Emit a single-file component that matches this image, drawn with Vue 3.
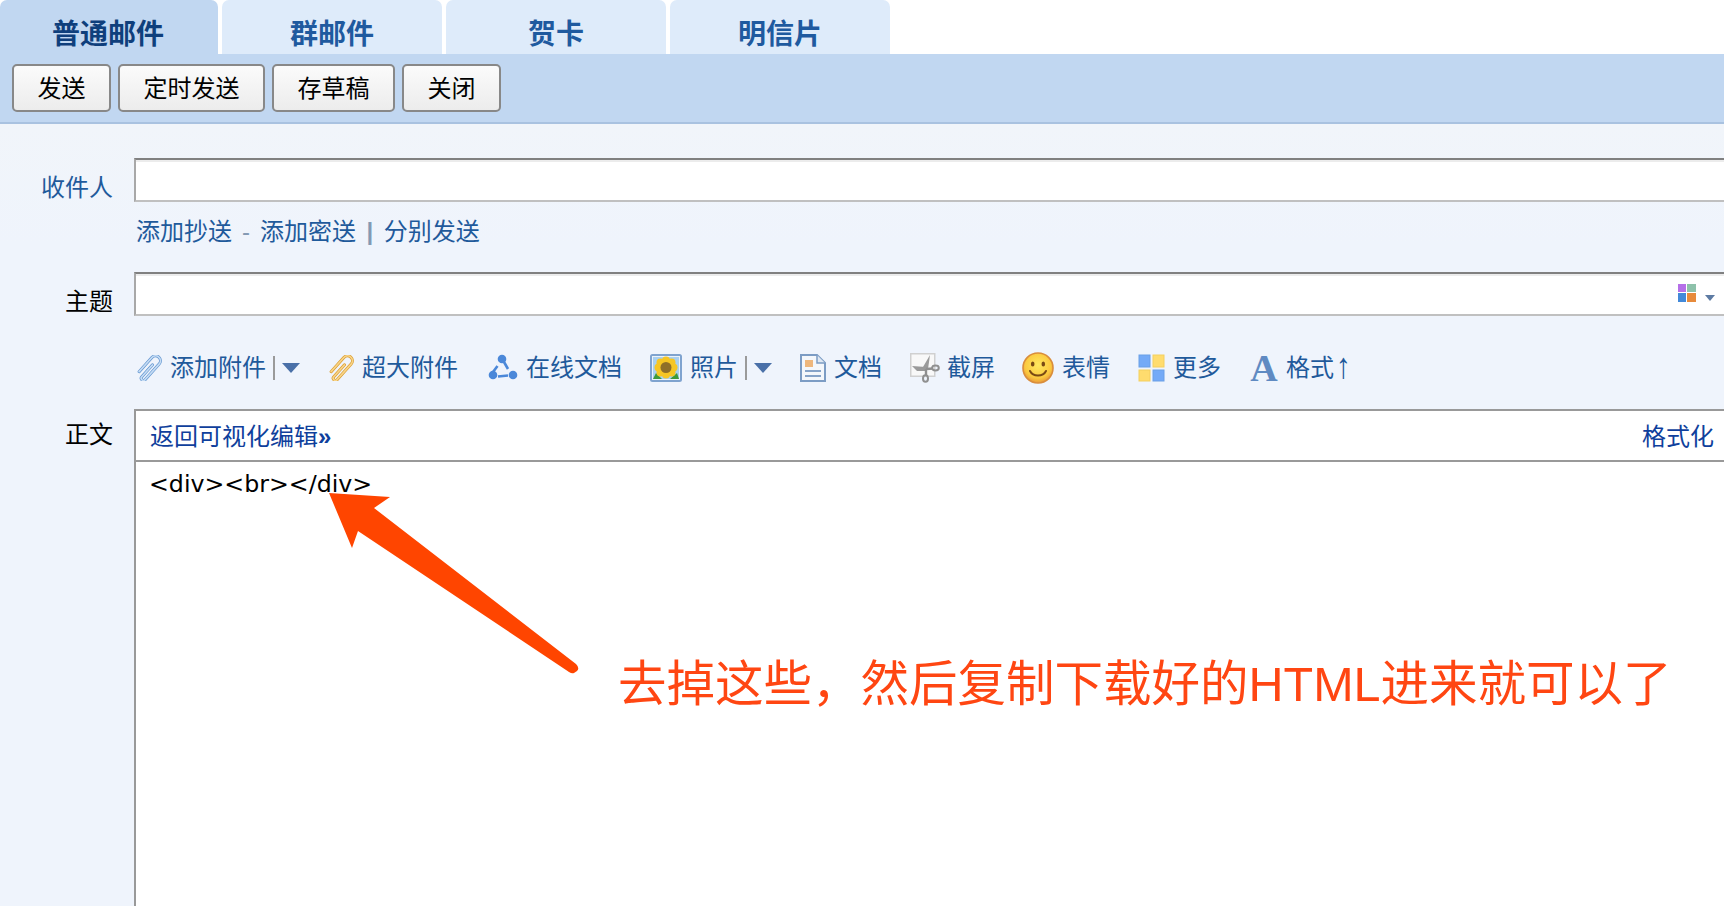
<template>
  <div class="page">
    <!-- 顶部标签 -->
    <div class="tabs">
      <div v-for="(tab, index) in tabs" :key="tab" class="tab" :class="{ active: index === 0 }">{{ tab }}</div>
    </div>

    <!-- 操作按钮 -->
    <div class="action-bar">
      <button v-for="btn in buttons" :key="btn" class="action-btn">{{ btn }}</button>
    </div>

    <div class="compose">
      <div class="row recipient-row">
        <label class="row-label blue">收件人</label>
        <div class="row-main">
          <input class="text-input" type="text" />
          <div class="cc-links">
            <a>添加抄送</a>
            <span class="dash">-</span>
            <a>添加密送</a>
            <span class="pipe">|</span>
            <a>分别发送</a>
          </div>
        </div>
      </div>

      <div class="row subject-row">
        <label class="row-label">主题</label>
        <div class="row-main subject-box">
          <input class="text-input" type="text" />
          <div class="color-pick">
            <svg width="18" height="18" viewBox="0 0 18 18">
              <rect x="0" y="0" width="8" height="8" fill="#b56fe8" />
              <rect x="9" y="0" width="9" height="8" fill="#8dc1aa" />
              <rect x="0" y="9" width="8" height="9" fill="#4289d9" />
              <rect x="9" y="9" width="9" height="9" fill="#e78a3b" />
            </svg>
            <svg class="pick-arrow" width="10" height="6" viewBox="0 0 10 6">
              <path d="M0 0H10L5 6Z" fill="#5d7ba3" />
            </svg>
          </div>
        </div>
      </div>

      <!-- 附件工具栏 -->
      <div class="attach-bar">
        <div class="attach-item">
          <svg width="26" height="26" viewBox="0 0 26 26">
            <g transform="rotate(42 13 13) translate(0 1.3)" fill="none" stroke-linecap="round">
              <path d="M13.500 7V23a2.200 2.200 0 0 0 4.400 0V2a4.900 4.900 0 0 0-9.800 0V21" stroke="#5f93cf" stroke-width="3" />
              <path d="M13.500 7V23a2.200 2.200 0 0 0 4.400 0V2a4.900 4.900 0 0 0-9.800 0V21" stroke="#c5dcf4" stroke-width="1.700" />
            </g>
          </svg>
          <span>添加附件</span>
          <i class="sep"></i>
          <i class="caret"></i>
        </div>
        <div class="attach-item">
          <svg width="26" height="26" viewBox="0 0 26 26">
            <g transform="rotate(42 13 13) translate(0 1.3)" fill="none" stroke-linecap="round">
              <path d="M13.500 7V23a2.200 2.200 0 0 0 4.400 0V2a4.900 4.900 0 0 0-9.800 0V21" stroke="#d99a2b" stroke-width="3" />
              <path d="M13.500 7V23a2.200 2.200 0 0 0 4.400 0V2a4.900 4.900 0 0 0-9.800 0V21" stroke="#f8d488" stroke-width="1.700" />
            </g>
          </svg>
          <span>超大附件</span>
        </div>
        <div class="attach-item online-doc">
          <svg width="30" height="28" viewBox="0 0 30 28">
            <g fill="#4b88d9">
              <circle cx="14" cy="5" r="4.300" />
              <circle cx="5" cy="21" r="4.300" />
              <circle cx="25" cy="21" r="4.300" />
            </g>
            <path d="M16 8L20 15M5 18L9.500 12M10 22.500L20 21.500" stroke="#4b88d9" stroke-width="2.600" fill="none" />
          </svg>
          <span>在线文档</span>
        </div>
        <div class="attach-item">
          <svg width="32" height="28" viewBox="0 0 32 28">
            <rect x="1" y="1" width="30" height="26" rx="1.500" fill="#a9d0f0" stroke="#7fa3cf" stroke-width="2" />
            <rect x="2.500" y="2.500" width="27" height="23" fill="none" stroke="#eaf2fb" />
            <path d="M3 25L6 19L12 25ZM20 25L27 19L29 25Z" fill="#3e9a3a" />
            <g fill="#f6c624">
              <circle cx="16" cy="6.500" r="4" />
              <circle cx="16" cy="20.500" r="4" />
              <circle cx="8.500" cy="13.500" r="4" />
              <circle cx="23.500" cy="13.500" r="4" />
              <circle cx="10.500" cy="8.500" r="4" />
              <circle cx="21.500" cy="8.500" r="4" />
              <circle cx="10.500" cy="18.500" r="4" />
              <circle cx="21.500" cy="18.500" r="4" />
            </g>
            <circle cx="16" cy="13.500" r="5.500" fill="#8f6f28" />
          </svg>
          <span>照片</span>
          <i class="sep"></i>
          <i class="caret"></i>
        </div>
        <div class="attach-item">
          <svg width="26" height="28" viewBox="0 0 26 28">
            <path d="M1 1H17L25 9V27H1Z" fill="#f4f7fb" stroke="#7c9cc4" stroke-width="2" />
            <path d="M17 1V9H25" fill="#dfe8f3" stroke="#7c9cc4" stroke-width="1.500" />
            <rect x="5" y="6" width="8" height="7" fill="#eeb77d" />
            <path d="M5 17H21M5 22H21" stroke="#86a3c8" stroke-width="2" />
          </svg>
          <span>文档</span>
        </div>
        <div class="attach-item screenshot">
          <svg width="30" height="30" viewBox="0 0 30 30">
            <rect x="0.750" y="0.750" width="24" height="22.500" fill="#f8f8f8" stroke="#d0d0d0" stroke-width="1.500" />
            <path d="M2 13L16 14L16 18L7 18Z" fill="#9a9a9a" />
            <path d="M20 2L18 16L13 14Z" fill="#9a9a9a" />
            <path d="M16 16L23 15.500M16 16V22" stroke="#8f8f8f" stroke-width="2.400" fill="none" />
            <ellipse cx="25.500" cy="15" rx="3.300" ry="2.400" fill="none" stroke="#8f8f8f" stroke-width="2" />
            <ellipse cx="15.500" cy="25.500" rx="2.500" ry="3.300" fill="none" stroke="#8f8f8f" stroke-width="2" />
          </svg>
          <span>截屏</span>
        </div>
        <div class="attach-item smiley">
          <svg width="32" height="32" viewBox="0 0 32 32">
            <defs>
              <radialGradient id="smileFill" cx="50%" cy="40%" r="60%">
                <stop offset="0%" stop-color="#ffe85f" />
                <stop offset="72%" stop-color="#fbc93f" />
                <stop offset="100%" stop-color="#e8983a" />
              </radialGradient>
            </defs>
            <circle cx="16" cy="16" r="15" fill="url(#smileFill)" stroke="#d98d3c" stroke-width="1.600" />
            <ellipse cx="10.700" cy="12" rx="1.800" ry="2.600" fill="#7a4a14" />
            <ellipse cx="21.300" cy="12" rx="1.800" ry="2.600" fill="#7a4a14" />
            <path d="M8 19C11 25 21 25 24 19" fill="none" stroke="#7a4a14" stroke-width="2" stroke-linecap="round" />
          </svg>
          <span>表情</span>
        </div>
        <div class="attach-item">
          <svg width="27" height="28" viewBox="0 0 27 28">
            <rect x="1" y="1" width="11" height="12" fill="#74aaf7" stroke="#6b9fe6" />
            <rect x="15" y="1" width="11" height="12" fill="#ffdc6e" stroke="#f4cf5f" />
            <rect x="1" y="16" width="11" height="11" fill="#ffdc6e" stroke="#f4cf5f" />
            <rect x="15" y="16" width="11" height="11" fill="#74aaf7" stroke="#6b9fe6" />
          </svg>
          <span>更多</span>
        </div>
        <div class="attach-item format">
          <span class="format-a">A</span>
          <span>格式<span class="up">↑</span></span>
        </div>
      </div>

      <!-- 正文编辑区 -->
      <div class="row body-row">
        <label class="row-label">正文</label>
        <div class="editor">
          <div class="editor-bar">
            <a>返回可视化编辑<b>»</b></a>
            <a>格式化</a>
          </div>
          <div class="editor-source">{{ source }}</div>
        </div>
      </div>
    </div>

    <!-- 截图标注 -->
    <svg class="note-arrow" width="600" height="700" viewBox="0 0 600 700">
      <path d="M329 493L390 497L374 508L576 664Q580 668 577 671L574 673Q572 674 569 672L358 531L352 548Z" fill="#ff4500" />
    </svg>
    <div class="note-text">去掉这些，然后复制下载好的HTML进来就可以了</div>
  </div>
</template>

<script setup>
const tabs = ['普通邮件', '群邮件', '贺卡', '明信片'];
const buttons = ['发送', '定时发送', '存草稿', '关闭'];
const source = '<div><br></div>';
</script>

<style scoped>
.page {
  position: relative;
  height: 906px;
  overflow: hidden;
  display: flex;
  flex-direction: column;
  background: #fff;
  font-family: "Liberation Sans", "Noto Sans CJK SC", sans-serif;
  font-size: 24px;
  color: #000;
}

.tabs {
  display: flex;
  gap: 4px;
  height: 54px;
}

.tab {
  box-sizing: border-box;
  width: 220px;
  padding-top: 16px;
  border-radius: 7px 7px 0 0;
  background: #deebfa;
  color: #1f5a9f;
  font-size: 28px;
  font-weight: bold;
  line-height: 38px;
  text-align: center;
}

.tab.active {
  width: 218px;
  padding-right: 2px;
  background: #c1d7f1;
  color: #0f3f7c;
}

.action-bar {
  box-sizing: border-box;
  display: flex;
  gap: 7px;
  height: 70px;
  padding: 10px 12px 0;
  background: #c1d7f1;
  border-bottom: 2px solid #a9c2e0;
}

.action-btn {
  box-sizing: border-box;
  height: 48px;
  padding: 2px 23.5px 0;
  border: 2px solid #888;
  border-radius: 5px;
  background: linear-gradient(#fbfbfb, #ececec);
  color: #000;
  font: inherit;
  line-height: 42px;
}

.compose {
  flex: 1;
  display: flex;
  flex-direction: column;
  min-height: 0;
  padding-top: 34px;
  background: linear-gradient(#f1f5fa, #eff4fc 120px);
}

.row {
  display: flex;
}

.row-label {
  flex: none;
  width: 113px;
  margin-right: 21px;
  padding-top: 8px;
  line-height: 44px;
  text-align: right;
}

.row-label.blue {
  color: #1f5a9b;
}

.row-main {
  flex: 1;
  min-width: 0;
}

.text-input {
  display: block;
  box-sizing: border-box;
  width: 100%;
  height: 44px;
  margin: 0;
  padding: 0;
  border: 0;
  border-top: 2px solid #808080;
  border-left: 2px solid #a8a8a8;
  border-bottom: 2px solid #c0c0c0;
  background: #fff;
  box-shadow: inset 0 2px 0 #ececec;
  outline: none;
}

.cc-links {
  display: flex;
  align-items: center;
  height: 28px;
  margin-top: 16px;
  padding-left: 2px;
  color: #1f5a9b;
  line-height: 28px;
}

.dash {
  margin: 0 10px;
  color: #8399b3;
}

.pipe {
  margin: 0 10.500px;
  color: #8399b3;
  font-weight: bold;
}

.subject-row {
  margin-top: 26px;
}

.subject-box {
  position: relative;
}

.color-pick {
  position: absolute;
  top: 12px;
  right: 9px;
  display: flex;
  align-items: flex-end;
  gap: 9px;
}

.pick-arrow {
  margin-bottom: 1px;
}

.attach-bar {
  display: flex;
  align-items: center;
  gap: 28px;
  height: 34px;
  margin-top: 27px;
  padding-left: 136px;
  color: #1f5a9b;
}

.attach-item {
  display: flex;
  align-items: center;
  gap: 7px;
  line-height: 34px;
  white-space: nowrap;
}

.attach-item > svg {
  margin-right: 1px;
}

.online-doc {
  margin-left: 2px;
}

.screenshot > svg {
  margin-right: 0;
}

.smiley {
  margin-left: -1px;
}

.sep {
  width: 2px;
  height: 24px;
  background: #9a9a9a;
}

.caret {
  width: 0;
  height: 0;
  border-top: 10px solid #4a70a8;
  border-left: 9px solid transparent;
  border-right: 9px solid transparent;
}

.format-a {
  width: 30px;
  color: #5f8ac2;
  font-family: "Liberation Serif", serif;
  font-size: 38px;
  font-weight: bold;
  line-height: 34px;
  text-align: center;
}

.up {
  display: inline-block;
  margin-left: 2px;
  font-size: 30px;
  line-height: 24px;
  transform: scaleY(1.200);
}

.body-row {
  flex: 1;
  min-height: 0;
  margin-top: 24px;
}

.body-row .row-label {
  padding-top: 4px;
}

.editor {
  flex: 1;
  min-width: 0;
  display: flex;
  flex-direction: column;
  border-top: 2px solid #999;
  border-left: 2px solid #999;
  background: #fff;
}

.editor-bar {
  box-sizing: border-box;
  display: flex;
  justify-content: space-between;
  height: 51px;
  padding: 10px 10px 0 14px;
  border-bottom: 2px solid #999;
  color: #0f3f9c;
  line-height: 32px;
}

.editor-source {
  padding: 5px 13px;
  color: #000;
  font-family: "DejaVu Sans", sans-serif;
  font-size: 23.700px;
  line-height: 34px;
}

.note-arrow {
  position: absolute;
  left: 0;
  top: 0;
}

.note-text {
  position: absolute;
  left: 618px;
  top: 654px;
  color: #ff4612;
  font-size: 48.500px;
  line-height: 60px;
  white-space: nowrap;
}
</style>

<style>
html,
body {
  margin: 0;
  overflow: hidden;
}
</style>
